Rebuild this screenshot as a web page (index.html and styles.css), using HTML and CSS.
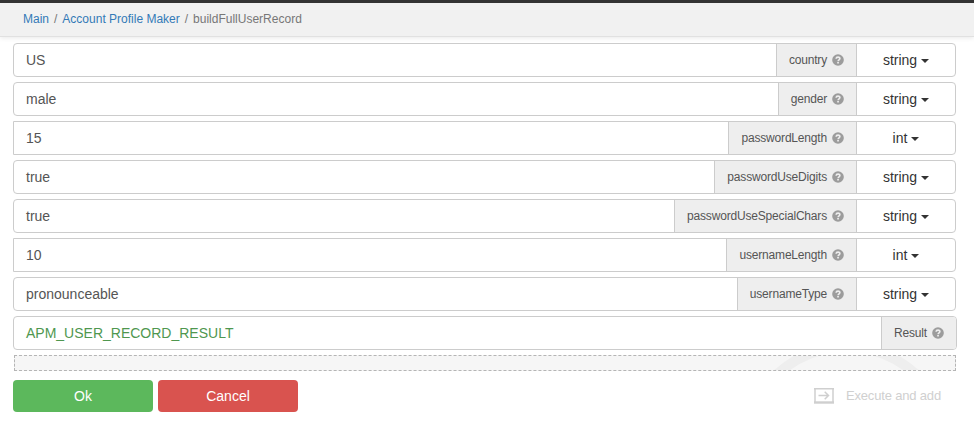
FILE: index.html
```html
<!DOCTYPE html>
<html lang="en">
<head>
<meta charset="utf-8">
<title>buildFullUserRecord</title>
<link rel="stylesheet" href="styles.css">
</head>
<body>
<svg class="defs" width="0" height="0">
  <symbol id="help" viewBox="0 0 12 12">
    <circle cx="6" cy="6" r="5.8" fill="#9c9c9c"/>
    <path d="M4.1 4.7C4.2 2.6 7.9 2.6 7.9 4.6C7.9 5.8 6.1 5.9 6.1 7.2" fill="none" stroke="#eee" stroke-width="1.6"/>
    <rect x="5.2" y="8" width="1.7" height="1.5" fill="#eee"/>
  </symbol>
</svg>
<header class="topbar">
  <nav class="breadcrumb"><a>Main</a><span class="sep">/</span><a>Account Profile Maker</a><span class="sep">/</span><span>buildFullUserRecord</span></nav>
</header>
<main class="form">
  <div class="row"><div class="value">US</div><div class="label">country<svg class="help"><use href="#help"/></svg></div><div class="type">string<i class="caret"></i></div></div>
  <div class="row"><div class="value">male</div><div class="label">gender<svg class="help"><use href="#help"/></svg></div><div class="type">string<i class="caret"></i></div></div>
  <div class="row number"><div class="value">15</div><div class="label">passwordLength<svg class="help"><use href="#help"/></svg></div><div class="type">int<i class="caret"></i></div></div>
  <div class="row"><div class="value">true</div><div class="label">passwordUseDigits<svg class="help"><use href="#help"/></svg></div><div class="type">string<i class="caret"></i></div></div>
  <div class="row"><div class="value">true</div><div class="label">passwordUseSpecialChars<svg class="help"><use href="#help"/></svg></div><div class="type">string<i class="caret"></i></div></div>
  <div class="row number"><div class="value">10</div><div class="label">usernameLength<svg class="help"><use href="#help"/></svg></div><div class="type">int<i class="caret"></i></div></div>
  <div class="row"><div class="value">pronounceable</div><div class="label">usernameType<svg class="help"><use href="#help"/></svg></div><div class="type">string<i class="caret"></i></div></div>
  <div class="row result"><div class="value">APM_USER_RECORD_RESULT</div><div class="label">Result<svg class="help"><use href="#help"/></svg></div></div>
  <div class="dropzone"><svg class="ring" width="150" height="14"><circle cx="73.5" cy="93" r="102" fill="none" stroke="#eeeeee" stroke-width="10"/></svg></div>
  <div class="actions">
    <button class="btn ok">Ok</button>
    <button class="btn cancel">Cancel</button>
    <div class="execute">
      <svg width="20" height="16" viewBox="0 0 20 16" fill="none" stroke="#cfcfcf">
        <path d="M1 0V15M19 0V15M0 .8H20" stroke-width="1.5"/>
        <path d="M0 14.5H20" stroke-width="2.4"/>
        <path d="M4.5 7.5H14.5M10.7 3.8L14.5 7.5L10.7 11.2" stroke-width="1.5"/>
      </svg>
      <span>Execute and add</span>
    </div>
  </div>
</main>
</body>
</html>
```
FILE: styles.css
```css
* { box-sizing: border-box; }
body { margin: 0; height: 431px; overflow: hidden; background: #fff; color: #555; font: 14px/20px "Liberation Sans", Arial, sans-serif; }
.defs { display: block; height: 0; }
.topbar { height: 37px; padding: 6px 23px 0; border-top: 3px solid #333; border-bottom: 1px solid #e1e1e1; background: #f1f1f1; box-shadow: 0 1px 5px rgba(0, 0, 0, .09); }
.breadcrumb { display: flex; font-size: 12px; color: #777; }
.breadcrumb a { color: #337ab7; }
.sep { padding: 0 5px; }
.form { width: 943px; margin: 6px 0 0 13px; }
.row { display: flex; height: 34px; margin-bottom: 5px; border: 1px solid #ccc; border-radius: 4px; background: #fff; overflow: hidden; line-height: 32px; }
.number { border-radius: 0 4px 4px 0; }
.value { flex: 1; padding-left: 12px; }
.label { display: flex; align-items: center; padding: 0 12px 1px; background: #eee; border-left: 1px solid #ccc; font-size: 12px; letter-spacing: -.18px; }
.help { width: 12px; height: 12px; margin-left: 5px; }
.type { display: flex; align-items: center; justify-content: center; width: 99px; border-left: 1px solid #ccc; color: #333; }
.caret { margin: 2px 0 0 4px; border: 4px solid transparent; border-top-color: #333; border-bottom: 0; }
.result { width: 944px; }
.result .value { color: #4f974f; }
.dropzone { height: 16px; margin-left: 1px; border: 1px dashed #b5b5b5; background: #f6f6f6; display: flex; justify-content: flex-end; padding-right: 32px; overflow: hidden; }
.ring { flex: none; }
.actions { display: flex; gap: 5px; margin-top: 9px; height: 32px; }
.btn { width: 140px; height: 32px; padding: 0; border: 0; border-radius: 4px; color: #fff; font: inherit; }
.ok { background: #5cb85c; }
.cancel { background: #d9534f; }
.execute { display: flex; align-items: center; gap: 12px; margin-left: auto; padding-right: 15px; color: #d0d0d0; font-size: 13px; letter-spacing: -.17px; }
```
